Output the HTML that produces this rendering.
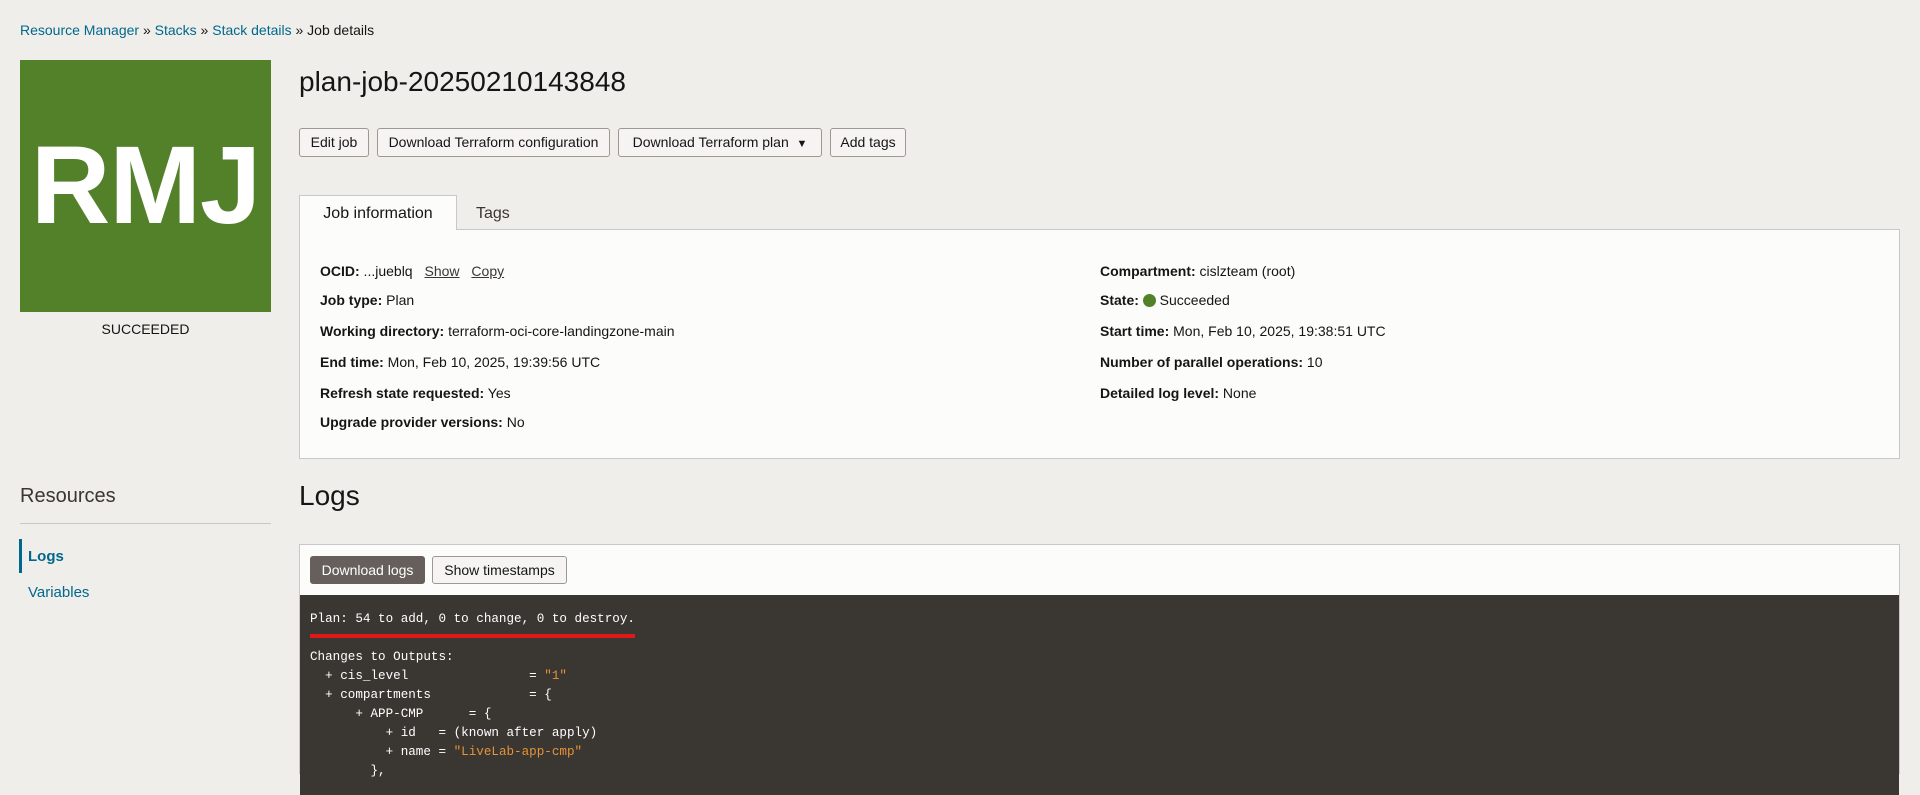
<!DOCTYPE html>
<html><head><meta charset="utf-8"><style>
*{margin:0;padding:0;box-sizing:border-box}
body{width:1920px;height:766px;overflow:hidden;background:#efeeeb;font-family:"Liberation Sans",sans-serif;color:#161513;position:relative}
.a{position:absolute;white-space:nowrap}
.bc{left:20px;top:22px;font-size:14px;color:#161513}
.bc a{color:#00688c;text-decoration:none}
.logo{left:20px;top:60px;width:251px;height:252px;background:#53812a;color:#fff;font-weight:bold;font-size:110px;text-align:center;line-height:252px;letter-spacing:-1px}
.succ{left:20px;width:251px;top:321px;text-align:center;font-size:14px}
h1{position:absolute;left:299px;top:66px;font-size:28px;font-weight:normal}
.btn{position:absolute;top:128px;height:29px;border:1px solid #9e9892;border-radius:3px;background:#f5f4f2;font-size:14px;line-height:27px;text-align:center;color:#161513}
.tab{left:299px;top:195px;width:158px;height:35px;background:#fcfcfb;border:1px solid #c8c8c8;border-bottom:none;font-size:16px;line-height:36px;text-align:center;z-index:2}
.tags{left:476px;top:205px;font-size:16px;color:#3a3632}
.panel{left:299px;top:229px;width:1601px;height:230px;background:#fcfcfb;border:1px solid #c8c8c8}
.r{position:absolute;font-size:14px;white-space:nowrap}
.r b{font-weight:bold}
.u{text-decoration:underline;margin-left:8px;color:#3a3632}
.res{left:20px;top:485px;font-size:20px;color:#3a3632}
.hr{left:20px;top:523px;width:251px;height:1px;background:#c8c8c8}
.bar{left:19px;top:539px;width:3px;height:34px;background:#00688c}
.nav1{left:28px;top:548px;font-size:15px;font-weight:bold;color:#00688c}
.nav2{left:28px;top:584px;font-size:15px;color:#00688c}
.logs{left:299px;top:480px;font-size:28px}
.lp{left:299px;top:544px;width:1601px;height:230px;background:#fcfcfb;border:1px solid #c8c8c8}
.dark{left:300px;top:595px;width:1599px;height:200px;background:#3a3632}
pre{position:absolute;left:310px;top:610px;font-family:"Liberation Mono",monospace;font-size:12.6px;line-height:19px;color:#fff}
.o{color:#e5943a}
.red{left:310px;top:634px;width:325px;height:4px;background:#e01818}
</style></head><body>
<div class="a bc"><a>Resource Manager</a> » <a>Stacks</a> » <a>Stack details</a> » Job details</div>
<div class="a logo">RMJ</div>
<div class="a succ">SUCCEEDED</div>
<h1>plan-job-20250210143848</h1>
<div class="btn" style="left:299px;width:70px">Edit job</div>
<div class="btn" style="left:377px;width:233px">Download Terraform configuration</div>
<div class="btn" style="left:618px;width:204px">Download Terraform plan &nbsp;<span style="font-size:11px">▼</span></div>
<div class="btn" style="left:830px;width:76px">Add tags</div>
<div class="a panel"></div>
<div class="a tab">Job information</div>
<div class="a tags">Tags</div>
<div class="r" style="left:320px;top:263px"><b>OCID:</b> ...jueblq <span class="u">Show</span> <span class="u">Copy</span></div>
<div class="r" style="left:320px;top:292px"><b>Job type:</b> Plan</div>
<div class="r" style="left:320px;top:323px"><b>Working directory:</b> terraform-oci-core-landingzone-main</div>
<div class="r" style="left:320px;top:354px"><b>End time:</b> Mon, Feb 10, 2025, 19:39:56 UTC</div>
<div class="r" style="left:320px;top:385px"><b>Refresh state requested:</b> Yes</div>
<div class="r" style="left:320px;top:414px"><b>Upgrade provider versions:</b> No</div>
<div class="r" style="left:1100px;top:263px"><b>Compartment:</b> cislzteam (root)</div>
<div class="r" style="left:1100px;top:292px"><b>State:</b> <span style="display:inline-block;width:13px;height:13px;border-radius:50%;background:#53812a;vertical-align:-2px"></span> Succeeded</div>
<div class="r" style="left:1100px;top:323px"><b>Start time:</b> Mon, Feb 10, 2025, 19:38:51 UTC</div>
<div class="r" style="left:1100px;top:354px"><b>Number of parallel operations:</b> 10</div>
<div class="r" style="left:1100px;top:385px"><b>Detailed log level:</b> None</div>
<div class="a res">Resources</div>
<div class="a hr"></div>
<div class="a bar"></div>
<div class="a nav1">Logs</div>
<div class="a nav2">Variables</div>
<div class="a logs">Logs</div>
<div class="a lp"></div>
<div class="btn" style="left:310px;top:556px;width:115px;height:28px;background:#665f5b;color:#fff;border-color:#665f5b;line-height:26px">Download logs</div>
<div class="btn" style="left:432px;top:556px;width:135px;height:28px;line-height:26px">Show timestamps</div>
<div class="a dark"></div>
<pre>Plan: 54 to add, 0 to change, 0 to destroy.

Changes to Outputs:
  + cis_level                = <span class="o">"1"</span>
  + compartments             = {
      + APP-CMP      = {
          + id   = (known after apply)
          + name = <span class="o">"LiveLab-app-cmp"</span>
        },</pre>
<div class="a red"></div>
</body></html>
